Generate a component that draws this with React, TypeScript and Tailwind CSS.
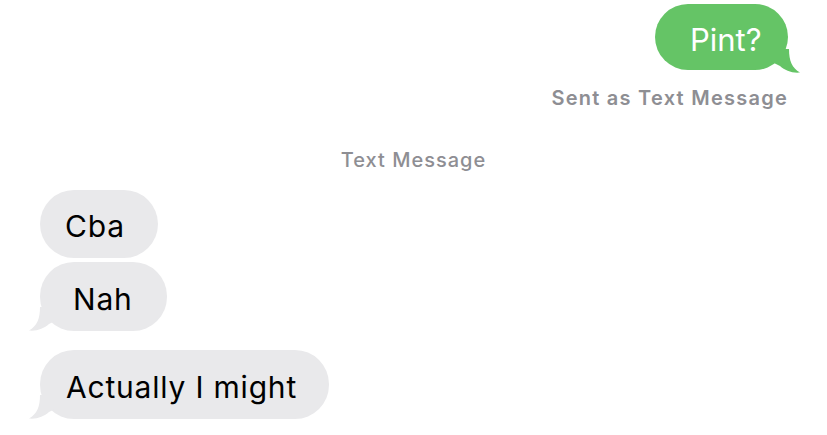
import React from "react";

function LeftTail() {
  return (
    <svg
      className="absolute left-[-11px] bottom-0"
      width="30"
      height="24"
      viewBox="0 0 30 24"
    >
      <path d="M11 0 C11 12 8 19 0 23.5 C8 24.3 15 21.5 20 17 L30 12 L30 0 Z" fill="#e9e9eb" />
    </svg>
  );
}

function RightTail() {
  return (
    <svg
      className="absolute right-[-12px] bottom-[-3px]"
      width="30"
      height="24"
      viewBox="0 0 30 24"
    >
      <path d="M19 0 C19 12 22 19 30 23.5 C22 24.3 15 21.5 10 17 L0 12 L0 0 Z" fill="#65c466" />
    </svg>
  );
}

export default function App() {
  return (
    <div
      className="w-[827px] h-[435px] bg-white flex flex-col overflow-hidden"
      style={{ fontFamily: "Inter, 'Noto Sans', sans-serif" }}
    >
      <div className="flex flex-col items-end pr-[39px] pt-[4px]">
        <div className="relative h-[66px] w-[133px] rounded-[33px] bg-[#65c466] flex items-center pl-[35px] text-white text-[31px] leading-none">
          <span className="relative z-10 top-[2px]">Pint?</span>
          <RightTail />
        </div>
        <div className="mt-[18px] mr-[0px] text-[20px] font-semibold leading-none text-[#8e8e93] tracking-[1.25px]">
          Sent as Text Message
        </div>
      </div>
      <div className="mt-[42px] text-center text-[20px] font-medium leading-none text-[#8e8e93] tracking-[1px]">
        Text Message
      </div>
      <div className="flex flex-col items-start pl-[40px] mt-[20px]">
        <div className="relative h-[68px] w-[118px] rounded-[34px] bg-[#e9e9eb] flex items-center pl-[25px] text-black text-[30px] leading-none tracking-[0.8px]">
          <span className="relative z-10 top-[2px]">Cba</span>
        </div>
        <div className="relative mt-[4px] h-[69px] w-[127px] rounded-[34px] bg-[#e9e9eb] flex items-center pl-[33px] text-black text-[30px] leading-none tracking-[0.8px]">
          <span className="relative z-10 top-[2px]">Nah</span>
          <LeftTail />
        </div>
        <div className="relative mt-[19px] h-[69px] w-[289px] rounded-[34px] bg-[#e9e9eb] flex items-center pl-[26px] text-black text-[30px] leading-none tracking-[0.8px]">
          <span className="relative z-10 top-[2px]">Actually I might</span>
          <LeftTail />
        </div>
      </div>
    </div>
  );
}
